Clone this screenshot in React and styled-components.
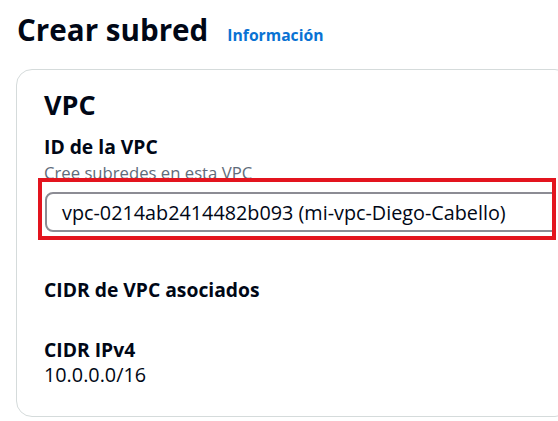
import React from "react";
import styled, { createGlobalStyle } from "styled-components";

const Global = createGlobalStyle`
  html, body { margin: 0; padding: 0; background: #ffffff; overflow: hidden; }
  body { font-family: "Open Sans", "Noto Sans", sans-serif; color: #000716; }
`;

const Page = styled.div`
  width: 558px;
  height: 421px;
  overflow: hidden;
  padding: 10px 0 0 16px;
  box-sizing: border-box;
`;

const Header = styled.div`
  display: flex;
  align-items: baseline;
  gap: 19px;
  height: 40px;
  margin-left: 1px;
`;

const Title = styled.h1`
  margin: 0;
  font-size: 29.6px;
  font-weight: 700;
  line-height: 40px;
  color: #000716;
`;

const InfoLink = styled.a`
  font-size: 15.7px;
  font-weight: 700;
  color: #0972d3;
  text-decoration: none;
`;

const Card = styled.section`
  margin-top: 19px;
  width: 555px;
  height: 348px;
  box-sizing: border-box;
  border: 1px solid #d5dbdb;
  border-radius: 16px;
  padding: 18px 0 0 27px;
  display: flex;
  flex-direction: column;
`;

const SectionTitle = styled.h2`
  margin: 0;
  font-size: 27px;
  font-weight: 700;
  line-height: 34px;
`;

const Label = styled.div`
  font-size: 19.3px;
  font-weight: 700;
  line-height: 24px;
  margin-top: ${(p) => p.$mt || 0}px;
`;

const Description = styled.div`
  margin-top: 3px;
  font-size: 16.7px;
  color: #5f6b7a;
  line-height: 22px;
`;

const Highlight = styled.div`
  margin: -6px 0 0 -6px;
  width: 518px;
  height: 62px;
  box-sizing: border-box;
  border: 4px solid #e3141e;
  background: #ffffff;
  overflow: hidden;
  padding: 10px 0 0 3px;
  position: relative;
`;

const Select = styled.div`
  width: 540px;
  height: 40px;
  box-sizing: border-box;
  border: 2px solid #8c8c94;
  border-radius: 8px;
  padding: 0 15px;
  display: flex;
  align-items: center;
  font-size: 19.8px;
  color: #000716;
  white-space: nowrap;
`;

const Value = styled.div`
  font-size: 19.8px;
  line-height: 26px;
`;

export default function App() {
  return (
    <>
      <Global />
      <Page>
        <Header>
          <Title>Crear subred</Title>
          <InfoLink href="#">Información</InfoLink>
        </Header>
        <Card>
          <SectionTitle>VPC</SectionTitle>
          <Label $mt={13}>ID de la VPC</Label>
          <Description>Cree subredes en esta VPC</Description>
          <Highlight>
            <Select>vpc-0214ab2414482b093 (mi-vpc-Diego-Cabello)</Select>
          </Highlight>
          <Label $mt={38}>CIDR de VPC asociados</Label>
          <Label $mt={36}>CIDR IPv4</Label>
          <Value>10.0.0.0/16</Value>
        </Card>
      </Page>
    </>
  );
}
